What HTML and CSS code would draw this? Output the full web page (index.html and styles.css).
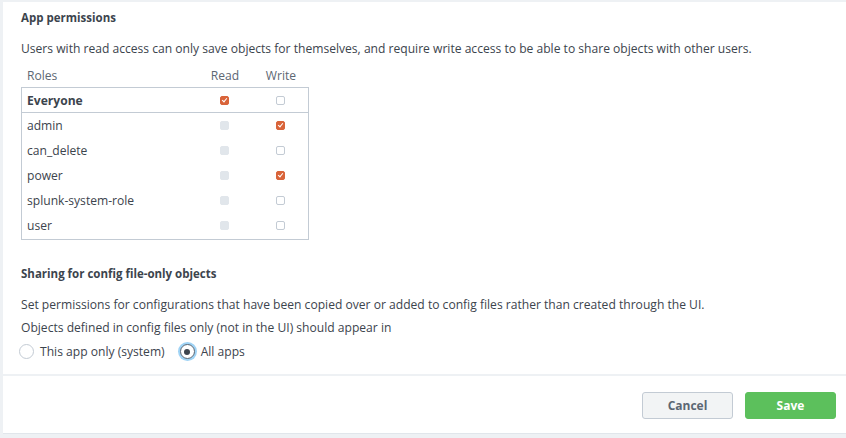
FILE: index.html
```html
<!DOCTYPE html>
<html>
<head>
<meta charset="utf-8">
<link rel="stylesheet" href="styles.css">
</head>
<body>
<div class="panel">
  <div class="content">
    <h2 class="heading">App permissions</h2>
    <p class="desc first">Users with read access can only save objects for themselves, and require write access to be able to share objects with other users.</p>
    <div class="perm">
      <div class="thead">
        <span class="c-role">Roles</span>
        <span class="c-chk">Read</span>
        <span class="c-chk">Write</span>
      </div>
      <div class="tbox">
        <div class="row everyone">
          <span class="c-role">Everyone</span>
          <span class="c-chk"><i class="cb on"></i></span>
          <span class="c-chk"><i class="cb"></i></span>
        </div>
        <div class="row">
          <span class="c-role">admin</span>
          <span class="c-chk"><i class="cb dis"></i></span>
          <span class="c-chk"><i class="cb on"></i></span>
        </div>
        <div class="row">
          <span class="c-role">can_delete</span>
          <span class="c-chk"><i class="cb dis"></i></span>
          <span class="c-chk"><i class="cb"></i></span>
        </div>
        <div class="row">
          <span class="c-role">power</span>
          <span class="c-chk"><i class="cb dis"></i></span>
          <span class="c-chk"><i class="cb on"></i></span>
        </div>
        <div class="row">
          <span class="c-role">splunk-system-role</span>
          <span class="c-chk"><i class="cb dis"></i></span>
          <span class="c-chk"><i class="cb"></i></span>
        </div>
        <div class="row">
          <span class="c-role">user</span>
          <span class="c-chk"><i class="cb dis"></i></span>
          <span class="c-chk"><i class="cb"></i></span>
        </div>
      </div>
    </div>
    <h2 class="heading second">Sharing for config file-only objects</h2>
    <p class="desc first">Set permissions for configurations that have been copied over or added to config files rather than created through the UI.</p>
    <p class="desc">Objects defined in config files only (not in the UI) should appear in</p>
    <div class="radios">
      <label class="radio"><span class="rb"></span>This app only (system)</label>
      <label class="radio"><span class="rb sel"></span>All apps</label>
    </div>
  </div>
  <div class="footer">
    <button class="btn cancel">Cancel</button>
    <button class="btn save">Save</button>
  </div>
</div>
</body>
</html>
```

FILE: styles.css
```css
html, body {
  margin: 0;
  padding: 0;
}
body {
  background: #eef1f4;
  font-family: "Open Sans", "Liberation Sans", Arial, sans-serif;
  font-size: 12.1px;
  color: #3c444d;
  width: 846px;
  height: 438px;
  overflow: hidden;
}
.panel {
  margin: 2px 0 0 3px;
  background: #fff;
  height: 432px;
  display: flex;
  flex-direction: column;
}
.content {
  padding: 0 0 0 18px;
  height: 372px;
  border-bottom: 2px solid #eef1f4;
}
.heading {
  margin: 0;
  font-size: 11.5px;
  font-weight: bold;
  padding-top: 8px;
  line-height: 15px;
}
.heading.second {
  padding-top: 26px;
}
.desc {
  margin: 0;
  line-height: 15px;
  padding-top: 8px;
}
.desc.first {
  padding-top: 16px;
}
.perm {
  width: 288px;
  margin-top: 12px;
}
.thead {
  display: flex;
  height: 15px;
  line-height: 15px;
  padding: 0 0 0 6px;
  color: #5c6773;
}
.c-role {
  flex: 1;
}
.c-chk {
  width: 56px;
  text-align: center;
  display: flex;
  justify-content: center;
  align-items: center;
}
.tbox {
  margin-top: 4px;
  border: 1px solid #c3cbd4;
  padding-bottom: 1px;
}
.row {
  display: flex;
  height: 25px;
  align-items: center;
  padding: 0 0 0 5px;
}
.row.everyone {
  font-weight: bold;
  border-bottom: 1px solid #c3cbd4;
  height: 24px;
}
.cb {
  display: block;
  width: 7px;
  height: 7px;
  border: 1px solid #c3cbd4;
  border-radius: 2px;
  background: #fff;
  position: relative;
}
.cb.dis {
  background: #e1e6eb;
  border-color: #e1e6eb;
}
.cb.on {
  background: #d9643a;
  border-color: #d9643a;
}
.cb.on::after {
  content: "";
  position: absolute;
  left: 2px;
  top: 0px;
  width: 2px;
  height: 4px;
  border: solid #fff;
  border-width: 0 1px 1px 0;
  transform: rotate(40deg);
}
.radios {
  display: flex;
  align-items: center;
  margin-top: 8px;
  margin-left: -2px;
}
.radio {
  display: flex;
  align-items: center;
  margin-right: 15px;
}
.rb {
  width: 15px;
  height: 15px;
  border: 1px solid #c3cbd4;
  border-radius: 50%;
  box-sizing: border-box;
  margin-right: 6px;
  position: relative;
  background: #fff;
}
.rb.sel {
  border-color: #5c6773;
  box-shadow: 0 0 0 2px #9fd3f5;
}
.rb.sel::after {
  content: "";
  position: absolute;
  left: 3.5px;
  top: 3.5px;
  width: 6px;
  height: 6px;
  border-radius: 50%;
  background: #3c444d;
}
.footer {
  flex: 1;
  display: flex;
  justify-content: flex-end;
  align-items: flex-start;
  padding: 16px 10px 0 0;
  border-bottom: 1px solid #e1e6eb;
}
.btn {
  width: 91px;
  height: 27px;
  border-radius: 3px;
  font-family: inherit;
  font-size: 12px;
  font-weight: bold;
  margin-left: 12px;
  cursor: pointer;
}
.cancel {
  background: #f2f4f5;
  border: 1px solid #c3cbd4;
  color: #5c6773;
}
.save {
  background: #5cc05c;
  border: 1px solid #5cc05c;
  color: #fff;
}
```
